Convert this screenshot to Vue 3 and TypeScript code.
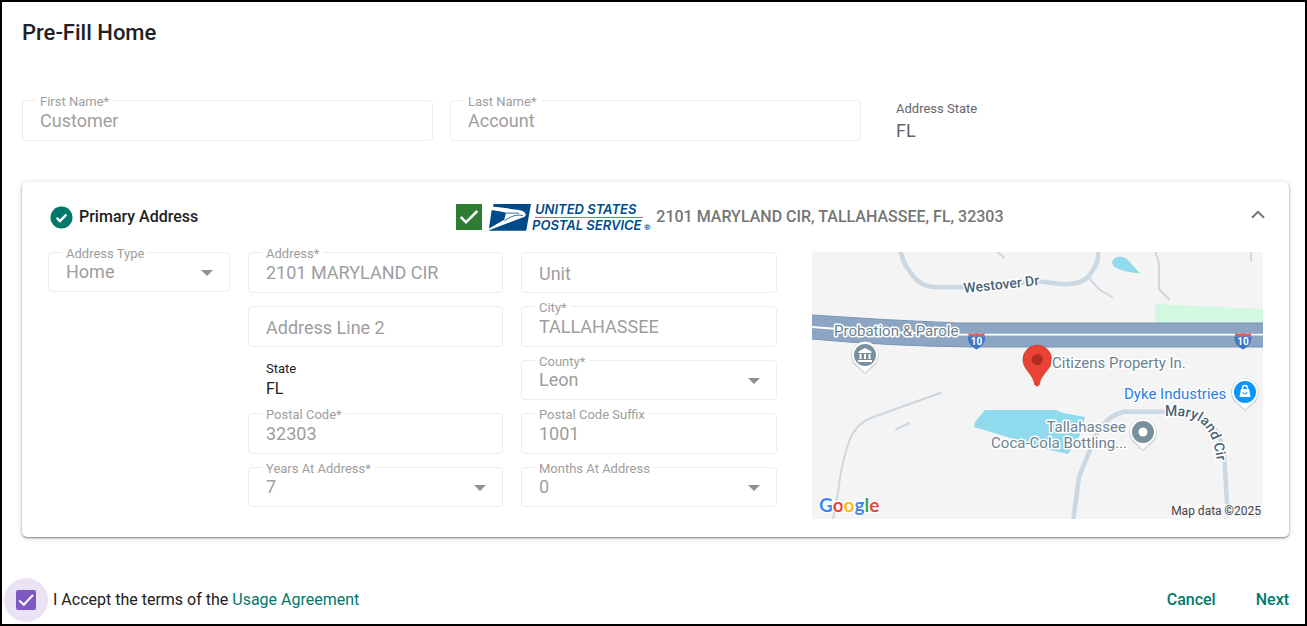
<script setup lang="ts">
import { ref } from 'vue'

interface Field {
  id: string
  label: string
  value: string
  kind: 'text' | 'select' | 'static'
}

const nameFields: Field[] = [
  { id: 'first-name', label: 'First Name*', value: 'Customer', kind: 'text' },
  { id: 'last-name', label: 'Last Name*', value: 'Account', kind: 'text' },
]

const addressFields: Field[] = [
  { id: 'address-type', label: 'Address Type', value: 'Home', kind: 'select' },
  { id: 'address', label: 'Address*', value: '2101 MARYLAND CIR', kind: 'text' },
  { id: 'unit', label: 'Unit', value: '', kind: 'text' },
  { id: 'address-2', label: 'Address Line 2', value: '', kind: 'text' },
  { id: 'city', label: 'City*', value: 'TALLAHASSEE', kind: 'text' },
  { id: 'state', label: 'State', value: 'FL', kind: 'static' },
  { id: 'county', label: 'County*', value: 'Leon', kind: 'select' },
  { id: 'postal-code', label: 'Postal Code*', value: '32303', kind: 'text' },
  { id: 'postal-suffix', label: 'Postal Code Suffix', value: '1001', kind: 'text' },
  { id: 'years', label: 'Years At Address*', value: '7', kind: 'select' },
  { id: 'months', label: 'Months At Address', value: '0', kind: 'select' },
]

const accepted = ref(true)
const expanded = ref(true)
</script>

<template>
  <main class="page">
    <div class="content">
      <h1 class="title">Pre-Fill Home</h1>

      <section class="names">
        <div v-for="f in nameFields" :key="f.id" class="field">
          <input :id="f.id" type="text" :value="f.value" disabled />
          <label :for="f.id">{{ f.label }}</label>
        </div>
        <div class="static muted">
          <span class="static-label">Address State</span>
          <span class="static-value">FL</span>
        </div>
      </section>

      <section class="card">
        <header class="card-head">
          <h2 class="card-title">
            <svg width="23" height="23" viewBox="0 0 23 23" aria-hidden="true">
              <circle cx="11.5" cy="11.5" r="11" fill="#00796b" />
              <path d="M6.7 11.8l3.3 3.3 6.3-6.4" fill="none" stroke="#fff" stroke-width="2.4" />
            </svg>
            Primary Address
          </h2>
          <div class="verified">
            <svg width="26" height="26" viewBox="0 0 26 26" aria-hidden="true">
              <rect width="26" height="26" fill="#2e7d32" />
              <path d="M4.8 13l5.2 5.3L21.3 7" fill="none" stroke="#fff" stroke-width="2.5" />
            </svg>
            <svg class="usps" width="163" height="40" viewBox="0 -6 163 40" role="img" aria-label="United States Postal Service">
              <path d="M4.5 1H42L37.2 27.7H0Z" fill="#004b87" />
              <path d="M2.5 3.6C12 4.6 20 5.4 28 6.8C33 7.4 36 8.6 36.6 11.2C37 13.4 36 13.8 33.6 14.4L-1 27.6L-.6 25L15 16.8L16.4 10.6C12 9.4 6 7.6 2 7.2Z" fill="#fff" />
              <path d="M2.6 7.2C8 7.6 13 8.6 17 9.8L15 16.8L0 25.4Z" fill="#004b87" />
              <path d="M17 10L30 10.2M15.4 17.6L21.4 14.2C26 12 30 11.6 34 12.6" fill="none" stroke="#004b87" stroke-width=".8" />
              <text x="46" y="11" class="usps-text">UNITED STATES</text>
              <path d="M46 14.5H154" stroke="#da5b64" stroke-width="1" />
              <text x="43" y="27" class="usps-text">POSTAL SERVICE</text>
              <text x="155" y="27" class="usps-reg">®</text>
            </svg>
            <span class="verified-text">2101 MARYLAND CIR, TALLAHASSEE, FL, 32303</span>
          </div>
          <button
            type="button"
            class="toggle"
            aria-label="Toggle primary address"
            :aria-expanded="expanded"
            @click="expanded = !expanded"
          >
            <svg width="14" height="9" viewBox="0 0 14 9" aria-hidden="true">
              <path d="M1 7.8L7 1.8l6 6" fill="none" stroke="#757575" stroke-width="2" />
            </svg>
          </button>
        </header>

        <div v-if="expanded" class="details">
          <div v-for="f in addressFields" :key="f.id" :class="['cell', f.id]">
            <div v-if="f.kind === 'static'" class="static compact">
              <span class="static-label">{{ f.label }}</span>
              <span class="static-value">{{ f.value }}</span>
            </div>
            <div v-else :class="['field', { empty: !f.value, drop: f.kind === 'select' }]">
              <select v-if="f.kind === 'select'" :id="f.id" disabled>
                <option selected>{{ f.value }}</option>
              </select>
              <input v-else :id="f.id" type="text" :value="f.value" disabled />
              <label :for="f.id">{{ f.label }}</label>
              <svg v-if="f.kind === 'select'" class="arrow" width="12" height="6" viewBox="0 0 12 6" aria-hidden="true">
                <path d="M0 0H12L6 6Z" fill="#919191" />
              </svg>
            </div>
          </div>

          <div class="map">
            <svg viewBox="0 0 451 267" role="img" aria-label="Map of the address">
              <rect width="451" height="267" fill="#f4f4f4" />
              <path d="M343 52L451 57V73H343Z" fill="#d3f8e2" />
              <path d="M173 158H244L251 161L273 165L268 183L256 202L238 198L162 175L163 170Z" fill="#90daee" />
              <path d="M300 10C301 7 304 4.500 308 4.700C312 4.800 314 6 316 8L328 21.500C320 21 311 19 305 16.300C302 15 300 13 300 10Z" fill="#90daee" />
              <g fill="none" stroke="#cbd7e1" stroke-linecap="round" stroke-linejoin="round">
                <path stroke-width="4.500" d="M88 -3C90 6 92 12 96 17C104 29 110 34 122 35C160 37 215 29 230 29.700L249 32C264 33 274 29 279 21C285 12 287 8 286 -3" />
                <path stroke-width="4.500" d="M261 270L267 225L278 198C283 180 294 164 312 159.700H360C395 158 408 180 412 200L415 251V270" />
                <g stroke-width="2">
                  <path d="M278 27L288 38L300 45" />
                  <path d="M343 -1L347 11V37L357 47.500" />
                  <path d="M439 -1V8.500" />
                  <path d="M184 -1L192 5.500" />
                  <path d="M21 268L26 240C29 214 33 200 38 187C42 178 47 171 60 165.500L129 140.700" />
                  <path d="M84 177.500L97 171" />
                </g>
              </g>
              <path d="M0 63Q70 68 145 71H451V95H160Q75 94 0 87Z" fill="#8ba5c2" />
              <path d="M0 63Q70 68 145 71H451M451 95H160Q75 94 0 87" fill="none" stroke="#7894b5" stroke-width="1" />
              <path d="M0 75Q70 81 150 82.700H451" fill="none" stroke="#fff" stroke-width="1.800" />

              <g v-for="x in [164.5, 431]" :key="x" :transform="`translate(${x} 80)`">
                <path d="M-8 1Q-4 3 0 1Q4 3 8 1V4.500H-8Z" fill="#e05a5a" />
                <path d="M-8.500 4.500H8.500C9 11 5 15 0 17.500C-5 15 -9 11 -8.500 4.500Z" fill="#3c78c8" />
                <text y="13" class="shield">10</text>
              </g>

              <g v-for="p in [{ x: 53, y: 103, c: '#78909c' }, { x: 331, y: 180, c: '#78909c' }, { x: 433, y: 140, c: '#0a96ff' }]" :key="p.x" :transform="`translate(${p.x} ${p.y})`">
                <path d="M0 19L-8.500 11.500A14 14 0 1 1 8.500 11.500Z" fill="#b9bec2" opacity=".6" />
                <path d="M0 17.500L-8 10A13 13 0 1 1 8 10Z" fill="#fff" />
                <circle r="11" :fill="p.c" />
              </g>
              <path d="M46.500 99.500L53 96L59.500 99.500V101H46.500ZM47.500 102H49.500V107H47.500ZM52 102H54V107H52ZM56.500 102H58.500V107H56.500ZM46 108H60V110H46Z" fill="#fff" />
              <circle cx="331" cy="180" r="4.500" fill="#fff" />
              <path d="M429 137H437L438.500 145H427.500Z" fill="#fff" />
              <path d="M430.500 138V136A2.500 2.500 0 0 1 435.500 136V138" fill="none" stroke="#fff" stroke-width="1.400" />
              <path d="M431 140A2 2 0 0 0 435 140" fill="none" stroke="#0a96ff" stroke-width="1" />

              <path d="M223 133C221 121 211 118 211 107.500A14 14 0 0 1 239.500 107.500C239.500 118 229 121 227 133Q225 135 223 133Z" fill="#ea4335" stroke="#c5352a" stroke-width=".8" />
              <circle cx="225.300" cy="107.500" r="5.500" fill="#b02c23" />

              <text x="22" y="84" class="place">Probation &amp; Parole</text>
              <text x="240" y="116" class="place">Citizens Property In.</text>
              <text x="312" y="147" class="place blue">Dyke Industries</text>
              <text x="314" y="180" class="place end">Tallahassee</text>
              <text x="315" y="196" class="place end">Coca-Cola Bottling...</text>
              <text x="152" y="41" class="road" transform="rotate(-6 152 41)">Westover Dr</text>
              <path id="maryland" d="M353 164H368C391 166 401 178 405 210" fill="none" />
              <text class="road"><textPath href="#maryland">Maryland Cir</textPath></text>

              <text x="7" y="260" class="google"><tspan fill="#4285f4">G</tspan><tspan fill="#ea4335">o</tspan><tspan fill="#fbbc04">o</tspan><tspan fill="#4285f4">g</tspan><tspan fill="#34a853">l</tspan><tspan fill="#ea4335">e</tspan></text>
              <rect x="359" y="252" width="92" height="15" fill="#fafafa" opacity=".75" />
              <text x="449" y="262.500" class="credit">Map data ©2025</text>
            </svg>
          </div>
        </div>
      </section>
    </div>

    <footer class="footer">
      <div class="terms">
        <span class="halo">
          <input id="accept" v-model="accepted" type="checkbox" />
          <svg v-if="accepted" width="20" height="20" viewBox="0 0 20 20" aria-hidden="true">
            <path d="M3.200 10.600l4.600 4.200L17 5" fill="none" stroke="#fff" stroke-width="2" />
          </svg>
        </span>
        <label for="accept">I Accept the terms of the</label>
        <a href="#">Usage Agreement</a>
      </div>
      <div class="actions">
        <button type="button">Cancel</button>
        <button type="button">Next</button>
      </div>
    </footer>
  </main>
</template>

<style>
body {
  background: #fff;
}
</style>

<style scoped>
.page {
  box-sizing: border-box;
  min-height: 100vh;
  border: 2px solid #000;
  padding: 16px 0 2px;
  display: flex;
  flex-direction: column;
  justify-content: space-between;
  font-family: Roboto, "Liberation Sans", sans-serif;
  color: #212121;
}

.content {
  padding: 0 16px 0 20px;
}

.title {
  margin: 0 0 52px;
  font-size: 22px;
  line-height: 30px;
  font-weight: 500;
}

.names {
  display: grid;
  grid-template-columns: repeat(3, 1fr);
  column-gap: 17px;
  margin-bottom: 38px;
}

.field {
  position: relative;
}

.field input,
.field select {
  display: block;
  box-sizing: border-box;
  width: 100%;
  height: 41px;
  margin: 0;
  padding: 0 17px;
  border: 1px solid #ededed;
  border-radius: 4px;
  background: #fff;
  appearance: none;
  font: 400 18px/24px Roboto, "Liberation Sans", sans-serif;
  color: #9e9e9e;
  opacity: 1;
}

.field select {
  height: 40px;
}

.field label {
  position: absolute;
  left: 14px;
  top: -6px;
  padding: 0 4px;
  background: #fff;
  font-size: 13px;
  line-height: 16px;
  color: #9e9e9e;
}

.field.empty label {
  top: 10px;
  font-size: 18px;
  line-height: 24px;
}

.arrow {
  position: absolute;
  right: 17px;
  top: 18px;
}

.static {
  display: flex;
  flex-direction: column;
  padding-left: 18px;
}

.static-label {
  font-size: 13px;
  line-height: 18px;
}

.static-value {
  font-size: 18px;
  line-height: 26px;
}

.muted {
  color: #666;
}

.compact .static-value {
  font-size: 16px;
  line-height: 22px;
}

.card {
  border-radius: 5px;
  padding: 15px 26px 18px;
  box-shadow: 0 1px 2px rgba(0, 0, 0, 0.45), 0 1px 6px rgba(0, 0, 0, 0.14);
}

.card-head {
  display: grid;
  grid-template-columns: 1fr 2fr auto;
  align-items: center;
  height: 40px;
  margin-bottom: 15px;
}

.card-title {
  display: flex;
  align-items: center;
  gap: 6px;
  margin: 0 0 0 2px;
  font-size: 16px;
  line-height: 24px;
  font-weight: 500;
}

.verified {
  display: flex;
  align-items: center;
  padding-left: 8px;
}

.usps {
  margin: 0 4px 0 7px;
}

.usps-text {
  font: italic 600 13px Inter, sans-serif;
  fill: #004b87;
}

.usps-reg {
  font: 700 8px Lato, sans-serif;
  fill: #004b87;
}

.verified-text {
  font-size: 16px;
  line-height: 24px;
  font-weight: 500;
  color: #757575;
}

.toggle {
  display: flex;
  padding: 4px 0 10px 2px;
  margin-right: -2px;
  border: 0;
  background: none;
  cursor: pointer;
}

.details {
  display: grid;
  grid-template-columns: 182fr 255fr 256fr 468fr;
  grid-template-rows: 41px 41px 40px 41px auto;
  column-gap: 18px;
  row-gap: 13px;
  grid-template-areas:
    "type line1 unit map"
    ". line2 city map"
    ". state county map"
    ". zip suffix map"
    ". years months map";
}

.address-type { grid-area: type; }
.address { grid-area: line1; }
.unit { grid-area: unit; }
.address-2 { grid-area: line2; }
.city { grid-area: city; }
.state { grid-area: state; }
.county { grid-area: county; }
.postal-code { grid-area: zip; }
.postal-suffix { grid-area: suffix; }
.years { grid-area: years; }
.months { grid-area: months; }

.map {
  grid-area: map;
  padding-left: 17px;
}

.map svg {
  display: block;
  width: 100%;
}

.place,
.road,
.google {
  font-family: Roboto, sans-serif;
  paint-order: stroke;
  stroke: #fff;
  stroke-width: 3px;
  stroke-linejoin: round;
}

.place {
  font-size: 15px;
  fill: #6b8290;
}

.blue {
  fill: #2a7de8;
}

.end {
  text-anchor: end;
}

.road {
  font-size: 14px;
  font-weight: 500;
  fill: #4c6375;
}

.shield {
  font: 700 10px Roboto, sans-serif;
  fill: #fff;
  text-anchor: middle;
}

.google {
  font-family: Lato, sans-serif;
  font-size: 19px;
  font-weight: 700;
}

.credit {
  font: 400 12px Roboto, sans-serif;
  fill: #444;
  text-anchor: end;
}

.footer {
  display: flex;
  justify-content: space-between;
  align-items: center;
  padding: 0 16px 0 2px;
}

.terms {
  display: flex;
  align-items: center;
  font-size: 16px;
  line-height: 20px;
}

.halo {
  position: relative;
  display: grid;
  place-items: center;
  width: 44px;
  height: 44px;
  margin-right: 5px;
  border-radius: 50%;
  background: #eae3f5;
}

.halo input {
  appearance: none;
  width: 20px;
  height: 20px;
  margin: 0;
  border: 2px solid #7e57c2;
  border-radius: 2px;
}

.halo input:checked {
  background: #7e57c2;
}

.halo svg {
  position: absolute;
  inset: 12px;
  pointer-events: none;
}

.terms a {
  margin-left: 4px;
  color: #00796b;
  text-decoration: none;
}

.actions {
  display: flex;
  gap: 40px;
}

.actions button {
  padding: 0;
  border: 0;
  background: none;
  font: 500 16px/20px Roboto, "Liberation Sans", sans-serif;
  color: #00796b;
  cursor: pointer;
}
</style>
